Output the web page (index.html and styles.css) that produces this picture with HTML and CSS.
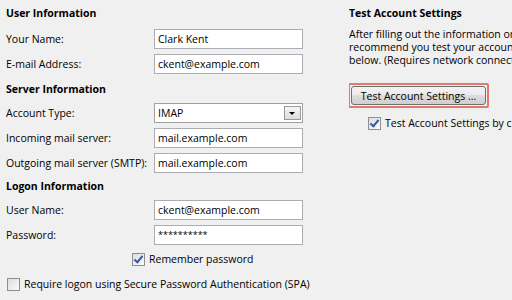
FILE: index.html
```html
<!DOCTYPE html>
<html lang="en">
<head>
    <meta charset="UTF-8">
    <title>Add New Account</title>
    <link rel="stylesheet" href="styles.css">
</head>
<body>
    <div class="page">
        <div class="left">
            <h2>User Information</h2>
            <div class="rows">
                <label>Your Name:</label>
                <div class="field">Clark Kent</div>
                <label>E-mail Address:</label>
                <div class="field">ckent@example.com</div>
            </div>

            <h2 class="sub server">Server Information</h2>
            <div class="rows">
                <label>Account Type:</label>
                <div class="field select">IMAP<span class="arrow"></span></div>
                <label>Incoming mail server:</label>
                <div class="field">mail.example.com</div>
                <label>Outgoing mail server (SMTP):</label>
                <div class="field">mail.example.com</div>
            </div>

            <h2 class="sub logon">Logon Information</h2>
            <div class="rows">
                <label>User Name:</label>
                <div class="field">ckent@example.com</div>
                <label>Password:</label>
                <div class="field pass">**********</div>
            </div>
            <div class="check remember"><span class="box on"></span>Remember password</div>
            <div class="check spa"><span class="box"></span>Require logon using Secure Password Authentication (SPA)</div>
        </div>

        <div class="right">
            <h2>Test Account Settings</h2>
            <p class="info">After filling out the information on this screen, we<br>recommend you test your account by clicking the button<br>below. (Requires network connection)</p>
            <div class="focus">
                <button class="btn">Test Account Settings ...</button>
            </div>
            <div class="check auto"><span class="box on"></span>Test Account Settings by clicking the Next button</div>
        </div>
    </div>
</body>
</html>
```

FILE: styles.css
```css
html, body {
    margin: 0;
    overflow: hidden;
}
body {
    background: #f0f0f0;
    font-family: "Open Sans", "DejaVu Sans", sans-serif;
    font-size: 10.5px;
    color: #000;
    width: 512px;
    height: 300px;
}
.page {
    display: flex;
    padding: 6px 0 0 6px;
}
.left {
    width: 297px;
    flex: none;
    white-space: nowrap;
}
.right {
    flex: 1;
    min-width: 0;
    overflow: hidden;
    margin-left: 46px;
    white-space: nowrap;
}
h2 {
    font-size: 10.5px;
    font-weight: bold;
    margin: 0;
    line-height: 14px;
}
.left > h2:first-child {
    margin-bottom: 9px;
}
.server {
    margin-top: 8px;
    margin-bottom: 7px;
}
.logon {
    margin-top: 6px;
    margin-bottom: 7px;
}
.rows {
    display: grid;
    grid-template-columns: 148px 149px;
    row-gap: 5px;
    align-items: center;
}
.field {
    height: 18px;
    line-height: 18px;
    border: 1px solid #abadb3;
    background: #fff;
    padding-left: 3px;
    position: relative;
}
.select {
    border-color: #a0a0a0;
}
.arrow {
    position: absolute;
    right: 1px;
    top: 2px;
    width: 15px;
    height: 12px;
    border: 1px solid #9a9a9a;
    background: linear-gradient(#f6f6f6, #dcdcdc);
}
.arrow::after {
    content: "";
    position: absolute;
    left: 4px;
    top: 5px;
    border-left: 3px solid transparent;
    border-right: 3px solid transparent;
    border-top: 3px solid #000;
}
.pass {
    font-size: 9px;
}
.check {
    display: flex;
    align-items: center;
    height: 14px;
}
.box {
    width: 11px;
    height: 11px;
    border: 1px solid #8e8f8f;
    background: linear-gradient(135deg, #dcdcdc, #fbfbfb);
    margin-right: 4px;
    flex: none;
    position: relative;
}
.box.on::after {
    content: "";
    position: absolute;
    left: 3px;
    top: 0;
    width: 3px;
    height: 7px;
    border-right: 2px solid #3457a8;
    border-bottom: 2px solid #3457a8;
    transform: rotate(40deg);
}
.remember {
    margin-top: 7px;
    margin-left: 126px;
}
.spa {
    margin-top: 11px;
    margin-left: 1px;
}
.info {
    margin: 8px 0 0;
    line-height: 13px;
}
.focus {
    margin-top: 16px;
    width: 137px;
    height: 21px;
    border: 2px solid #e07a6e;
    border-radius: 2px;
    margin-left: -1px;
}
.btn {
    display: block;
    width: 135px;
    height: 19px;
    margin: 1px;
    padding: 0;
    border: 1px solid #707070;
    border-radius: 3px;
    background: linear-gradient(#f2f2f2 0%, #ebebeb 45%, #dddddd 50%, #cfcfcf 100%);
    font: inherit;
    color: #000;
}
.auto {
    margin-top: 8px;
    margin-left: 19px;
}
```
